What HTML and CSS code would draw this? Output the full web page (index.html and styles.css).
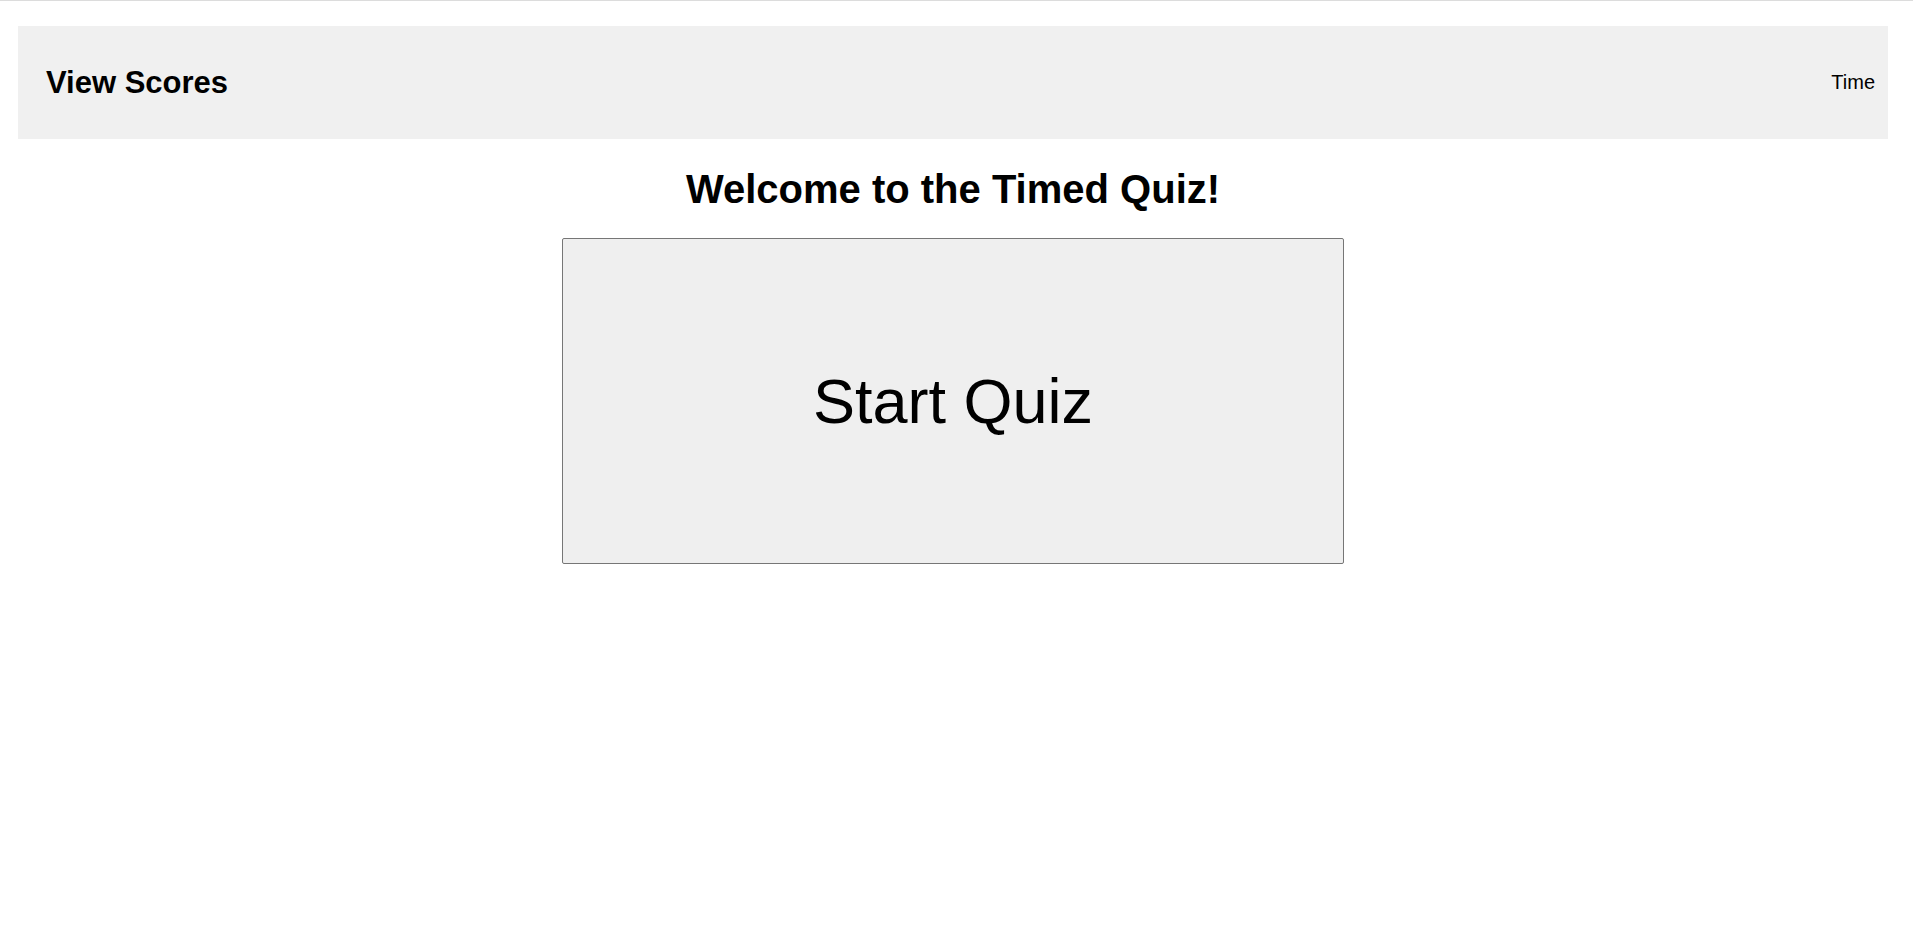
FILE: index.html
```html
<!DOCTYPE html>
<html lang="en">
<head>
<meta charset="utf-8">
<title>Timed Quiz</title>
<link rel="stylesheet" href="styles.css">
</head>
<body>
<div class="topline"></div>
<div class="page">
  <header class="bar">
    <a class="scores">View Scores</a>
    <span class="time">Time</span>
  </header>
  <main class="main">
    <h1 class="title">Welcome to the Timed Quiz!</h1>
    <button class="start">Start Quiz</button>
  </main>
</div>
</body>
</html>
```
FILE: styles.css
```css
html, body {
  margin: 0;
  padding: 0;
  background: #fff;
}
body {
  font-family: "Liberation Sans", Arial, sans-serif;
  color: #000;
}
.topline {
  height: 1px;
  background: #dcdcdc;
}
.page {
  width: 1870px;
  margin: 25px 0 0 18px;
}
.bar {
  height: 113px;
  background: #f0f0f0;
  display: flex;
  align-items: center;
  justify-content: space-between;
  padding: 0 13px 0 28px;
  box-sizing: border-box;
}
.scores {
  font-size: 31px;
  font-weight: bold;
  line-height: 37px;
}
.time {
  font-size: 20px;
  line-height: 23px;
}
.main {
  display: flex;
  flex-direction: column;
  align-items: center;
}
.title {
  font-size: 40px;
  font-weight: bold;
  line-height: 46px;
  margin: 27px 0 26px;
}
.start {
  width: 782px;
  height: 326px;
  box-sizing: border-box;
  background: #efefef;
  border: 1px solid #767676;
  border-radius: 2px;
  font-family: "Liberation Sans", Arial, sans-serif;
  font-size: 63px;
  color: #000;
  padding: 0;
}
```
